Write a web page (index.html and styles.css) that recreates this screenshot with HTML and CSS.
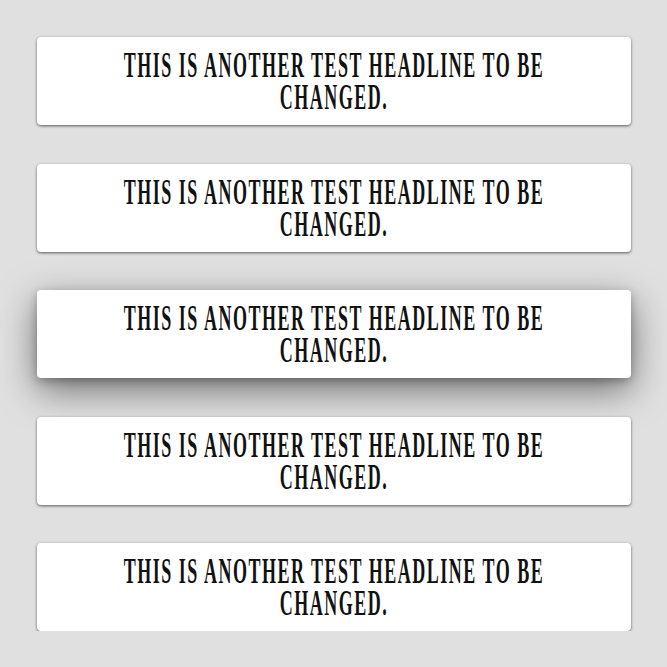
FILE: index.html
```html
<!DOCTYPE html>
<html>
<head>
<meta charset="utf-8">
<link rel="stylesheet" href="styles.css">
</head>
<body>
<main class="list">
  <div class="card"><h1 class="headline">THIS IS ANOTHER TEST HEADLINE TO BE CHANGED.</h1></div>
  <div class="card"><h1 class="headline">THIS IS ANOTHER TEST HEADLINE TO BE CHANGED.</h1></div>
  <div class="card card-raised"><h1 class="headline">THIS IS ANOTHER TEST HEADLINE TO BE CHANGED.</h1></div>
  <div class="card"><h1 class="headline">THIS IS ANOTHER TEST HEADLINE TO BE CHANGED.</h1></div>
  <div class="card"><h1 class="headline">THIS IS ANOTHER TEST HEADLINE TO BE CHANGED.</h1></div>
</main>
</body>
</html>
```
FILE: styles.css
```css
html, body {
  margin: 0;
  padding: 0;
  background: #e0e0e0;
}
.list {
  display: flex;
  flex-direction: column;
  gap: 38.5px;
  padding: 37px 36px 0 37px;
}
.card {
  background: #fff;
  border-radius: 4px;
  height: 88px;
  box-sizing: border-box;
  padding: 12px 0;
  display: flex;
  justify-content: center;
  overflow: visible;
  box-shadow: 0 1px 3px rgba(0,0,0,0.6);
}
.card-raised {
  box-shadow: 0 12px 36px rgba(0,0,0,0.5), 0 3px 8px rgba(0,0,0,0.25);
}
.headline {
  flex: none;
  margin: 0;
  width: 900px;
  font-family: "Liberation Serif", serif;
  font-weight: bold;
  font-size: 36px;
  line-height: 32px;
  letter-spacing: 3px;
  color: #111;
  text-align: center;
  transform: scaleX(0.5);
  transform-origin: center;
}
```
